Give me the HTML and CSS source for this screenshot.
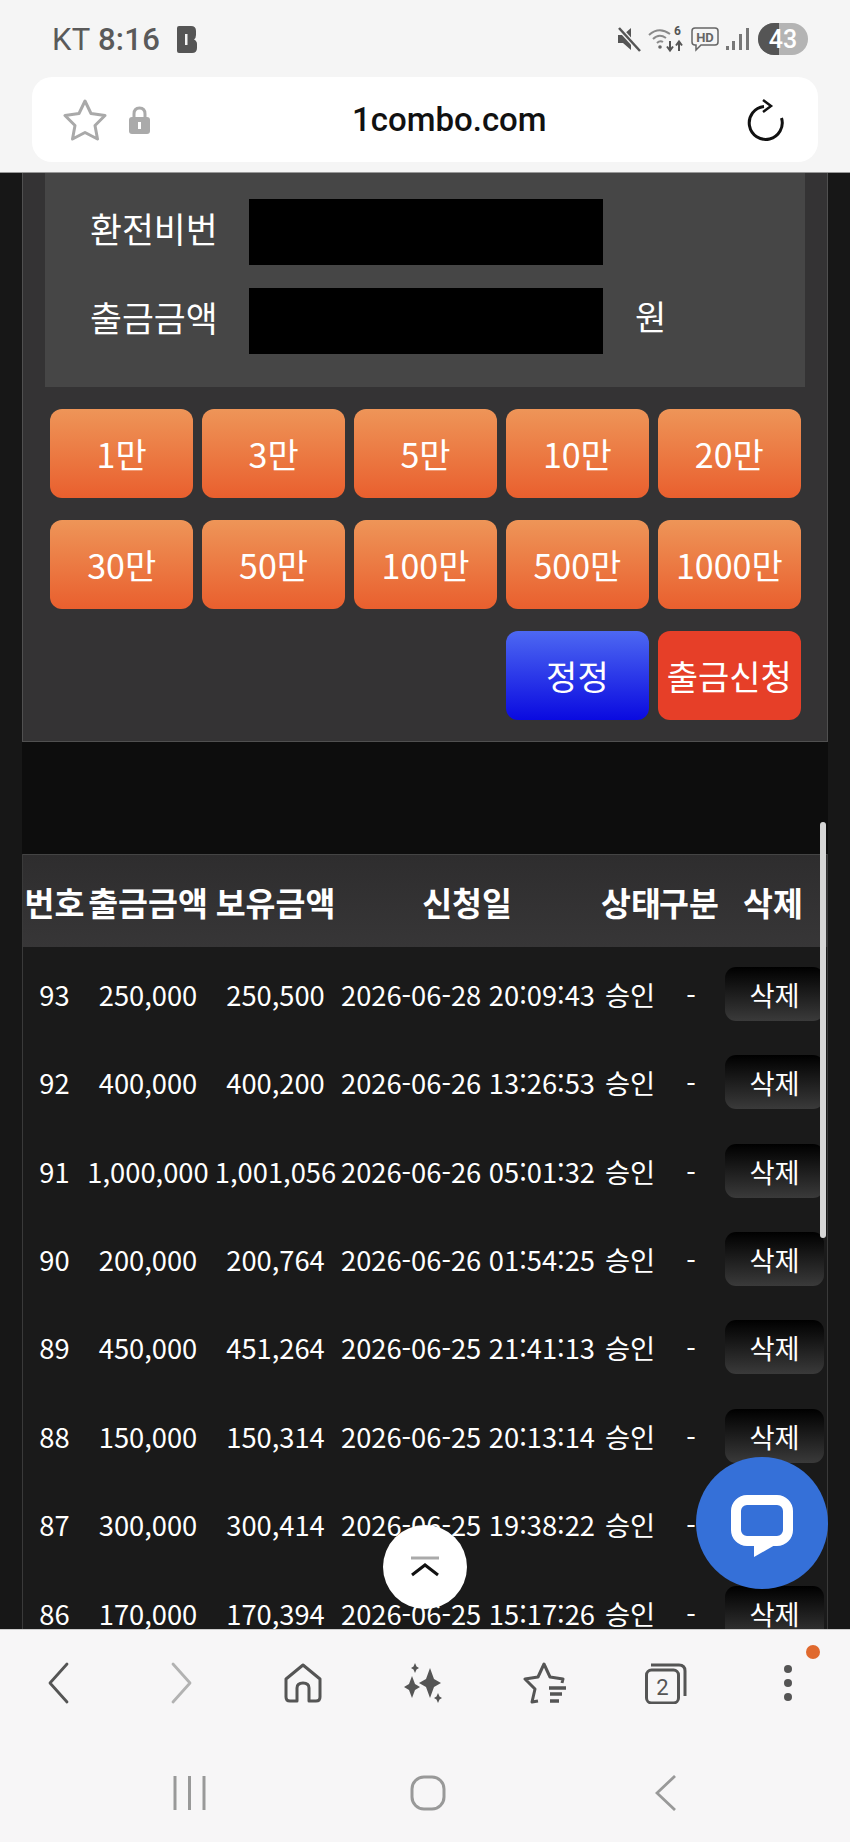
FILE: index.html
```html
<!DOCTYPE html>
<html lang="ko">
<head>
  <meta charset="UTF-8">
  <title>출금신청</title>
  <link rel="stylesheet" href="styles.css">
</head>
<body>

  <header class="top-chrome">
    <div class="status-bar">
      <div class="status-left">
        <span class="clock">KT <b class="clock-time">8:16</b></span>
        <svg class="b-icon" width="20" height="27" viewBox="0 0 20 27"><path d="M0 2Q0 0 2 0H14Q19 0 19 5V9Q19 12 17 13.500Q20 15 20 18V22Q20 27 15 27H2Q0 27 0 25Z" fill="#555"/><path d="M8 8H10.500V19H8Z" fill="#f5f5f5"/></svg>
      </div>
      <div class="status-right">
        <svg width="24" height="26" viewBox="0 0 24 26"><path d="M1 9H6L14 2V24L6 17H1Z" fill="#555"/><path d="M2 2L23 25" stroke="#f5f5f5" stroke-width="5"/><path d="M2 2L23 25" stroke="#555" stroke-width="2.500"/></svg>
        <svg width="36" height="28" viewBox="0 0 36 28" fill="none"><path d="M1 10Q11 1 22 9M5 14Q11 8 18 13M9 18Q12 15 15 17" stroke="#8a8a8a" stroke-width="2"/><circle cx="12" cy="22" r="1.800" fill="#666"/><text x="26" y="10" class="wifi-num">6</text><path d="M22 16V25M19 21.500L22 25.500L25 21.500M31 26V17M28 20.500L31 16.500L34 20.500" stroke="#555" stroke-width="2"/></svg>
        <svg width="28" height="26" viewBox="0 0 28 26" fill="none"><path d="M4 2H24Q27 2 27 5V16Q27 19 24 19H10L5 24V19H4Q1 19 1 16V5Q1 2 4 2Z" stroke="#666" stroke-width="1.500"/><text x="14" y="16" text-anchor="middle" class="hd-text">HD</text></svg>
        <svg width="23" height="24" viewBox="0 0 23 24" fill="#777"><rect x="0" y="19" width="3" height="4"/><rect x="6" y="14" width="3" height="9"/><rect x="13" y="7" width="3" height="16"/><rect x="20" y="1" width="3" height="22"/></svg>
        <div class="battery">
          <span class="battery-fill"></span>
          <span class="battery-num">43</span>
        </div>
      </div>
    </div>
    <div class="url-bar">
      <div class="url-left">
        <svg width="46" height="43" viewBox="0 0 46 43" fill="none"><path d="M23 3L29 15.500L43 17.500L33 27.500L35.500 41L23 34.500L10.500 41L13 27.500L3 17.500L17 15.500Z" stroke="#a9a9a9" stroke-width="3" stroke-linejoin="round"/></svg>
        <svg width="21" height="28" viewBox="0 0 21 28"><path d="M5 13V8Q5 2 10.500 2Q16 2 16 8V13" fill="none" stroke="#aaa" stroke-width="3"/><rect x="0" y="11" width="21" height="17" rx="3" fill="#aaa"/><rect x="9" y="16" width="3" height="7" fill="#fff"/></svg>
      </div>
      <span class="url-text">1combo.com</span>
      <svg class="reload" width="38" height="42" viewBox="0 0 38 42" fill="none"><path d="M17 7.500A16.500 16.500 0 1 0 34.500 19" stroke="#111" stroke-width="3"/><path d="M16 1L24 7L16 13" stroke="#111" stroke-width="2.500"/></svg>
    </div>
  </header>

  <main class="page">
    <section class="panel">
      <div class="form-box">
        <div class="form-row">
          <label class="form-label">환전비번</label>
          <div class="masked"></div>
        </div>
        <div class="form-row">
          <label class="form-label">출금금액</label>
          <div class="masked"></div>
          <span class="unit">원</span>
        </div>
      </div>
      <div class="amount-grid">
        <button type="button" class="btn">1만</button>
        <button type="button" class="btn">3만</button>
        <button type="button" class="btn">5만</button>
        <button type="button" class="btn">10만</button>
        <button type="button" class="btn">20만</button>
        <button type="button" class="btn">30만</button>
        <button type="button" class="btn">50만</button>
        <button type="button" class="btn">100만</button>
        <button type="button" class="btn">500만</button>
        <button type="button" class="btn">1000만</button>
        <button type="button" class="btn btn-blue">정정</button>
        <button type="button" class="btn btn-red">출금신청</button>
      </div>
    </section>

    <div class="spacer"></div>

    <table class="list">
      <colgroup>
        <col class="c-no"><col class="c-out"><col class="c-have"><col class="c-date"><col class="c-state"><col class="c-type"><col class="c-del">
      </colgroup>
      <thead>
        <tr><th>번호</th><th>출금금액</th><th>보유금액</th><th>신청일</th><th>상태</th><th>구분</th><th>삭제</th></tr>
      </thead>
      <tbody>
        <tr><td>93</td><td>250,000</td><td>250,500</td><td>2026-06-28 20:09:43</td><td>승인</td><td>-</td><td><button type="button" class="del">삭제</button></td></tr>
        <tr><td>92</td><td>400,000</td><td>400,200</td><td>2026-06-26 13:26:53</td><td>승인</td><td>-</td><td><button type="button" class="del">삭제</button></td></tr>
        <tr><td>91</td><td>1,000,000</td><td>1,001,056</td><td>2026-06-26 05:01:32</td><td>승인</td><td>-</td><td><button type="button" class="del">삭제</button></td></tr>
        <tr><td>90</td><td>200,000</td><td>200,764</td><td>2026-06-26 01:54:25</td><td>승인</td><td>-</td><td><button type="button" class="del">삭제</button></td></tr>
        <tr><td>89</td><td>450,000</td><td>451,264</td><td>2026-06-25 21:41:13</td><td>승인</td><td>-</td><td><button type="button" class="del">삭제</button></td></tr>
        <tr><td>88</td><td>150,000</td><td>150,314</td><td>2026-06-25 20:13:14</td><td>승인</td><td>-</td><td><button type="button" class="del">삭제</button></td></tr>
        <tr><td>87</td><td>300,000</td><td>300,414</td><td>2026-06-25 19:38:22</td><td>승인</td><td>-</td><td><button type="button" class="del">삭제</button></td></tr>
        <tr><td>86</td><td>170,000</td><td>170,394</td><td>2026-06-25 15:17:26</td><td>승인</td><td>-</td><td><button type="button" class="del">삭제</button></td></tr>
      </tbody>
    </table>

    <div class="scroll-thumb"></div>

    <button type="button" class="to-top" aria-label="맨 위로">
      <svg width="30" height="22" viewBox="0 0 30 22" fill="none"><path d="M1 2H29" stroke="#aaa" stroke-width="3"/><path d="M2 19L15 9L28 19" stroke="#111" stroke-width="3"/></svg>
    </button>

    <button type="button" class="chat" aria-label="채팅">
      <svg width="64" height="64" viewBox="0 0 64 64" fill="none"><rect x="6" y="6" width="52" height="41" rx="11" stroke="#fff" stroke-width="10"/><path d="M24 42V63L45 51V42Z" fill="#fff"/></svg>
    </button>
  </main>

  <footer class="bottom-chrome">
    <nav class="browser-nav">
      <svg width="22" height="42" viewBox="0 0 22 42" fill="none"><path d="M20 2L3 21L20 40" stroke="#555" stroke-width="2.800" stroke-linecap="round" stroke-linejoin="round"/></svg>
      <svg class="nav-fwd" width="22" height="42" viewBox="0 0 22 42" fill="none"><path d="M2 2L19 21L2 40" stroke="#b2b2b2" stroke-width="2.800" stroke-linecap="round" stroke-linejoin="round"/></svg>
      <svg class="nav-home" width="38" height="40" viewBox="0 0 38 40" fill="none"><path d="M13 38H6Q2 38 2 34V16L19 2L36 16V34Q36 38 32 38H25V25Q25 20 19 20Q13 20 13 25Z" stroke="#555" stroke-width="3" stroke-linejoin="round"/></svg>
      <svg width="38" height="40" viewBox="0 0 38 40" fill="#555"><path d="M26 5L30 16L37 20L30 24L26 35L22 24L15 20L22 16Z"/><path d="M8 13L11 21L16 24L11 27L8 35L5 27L0 24L5 21Z"/><path d="M11 0L12.500 3.500L15 5L12.500 6.500L11 10L9.500 6.500L7 5L9.500 3.500Z"/><path d="M34 30L35.500 33.500L38 35L35.500 36.500L34 40L32.500 36.500L30 35L32.500 33.500Z"/></svg>
      <svg width="43" height="42" viewBox="0 0 43 42" fill="none"><path d="M15 39L9 40L12 27L2 17L15 15L21 2L27 15L40 17L39 21" stroke="#555" stroke-width="3" stroke-linejoin="round"/><path d="M26 26H43M27 32H39M27 39H36" stroke="#555" stroke-width="3.500"/></svg>
      <svg width="42" height="42" viewBox="0 0 42 42" fill="none"><rect x="1.500" y="8" width="32" height="33" rx="5" stroke="#555" stroke-width="3"/><path d="M6 3H34Q40 3 40 9V34" stroke="#555" stroke-width="3"/><text x="17.500" y="33" text-anchor="middle" class="tab-num">2</text></svg>
      <div class="more">
        <span class="more-dot"></span><span class="more-dot"></span><span class="more-dot"></span>
        <span class="notice-dot"></span>
      </div>
    </nav>
    <nav class="system-nav">
      <svg width="33" height="34" viewBox="0 0 33 34" stroke="#999" stroke-width="3"><path d="M2 0V34M16.500 0V34M31 0V34"/></svg>
      <svg class="sys-home" width="36" height="36" viewBox="0 0 36 36" fill="none"><rect x="2" y="2" width="32" height="32" rx="12" stroke="#999" stroke-width="3"/></svg>
      <svg width="22" height="36" viewBox="0 0 22 36" fill="none"><path d="M20 1L2 18L20 35" stroke="#999" stroke-width="2.800"/></svg>
    </nav>
  </footer>

</body>
</html>
```

FILE: styles.css
```css
* {
  box-sizing: border-box;
}
body {
  margin: 0;
  height: 1842px;
  display: flex;
  flex-direction: column;
  overflow: hidden;
  background: #171717;
  font-family: "Noto Sans CJK KR", "Noto Sans", sans-serif;
}

/* browser top */
.top-chrome {
  height: 173px;
  flex: none;
  background: #f5f5f5;
  padding: 23px 32px 0;
  border-bottom: 1px solid #999;
}
.status-bar {
  height: 32px;
  display: flex;
  justify-content: space-between;
  align-items: center;
  padding: 0 10px 0 20px;
}
.status-left {
  display: flex;
  align-items: center;
  gap: 17px;
}
.clock {
  font-family: Roboto, sans-serif;
  font-size: 31px;
  letter-spacing: 0.300px;
  color: #5a5a5a;
}
.clock-time {
  font-weight: 500;
}
.status-right {
  display: flex;
  align-items: center;
  gap: 7px;
}
.wifi-num {
  font-family: Roboto, sans-serif;
  font-size: 12px;
  font-weight: 700;
  fill: #555;
}
.hd-text {
  font-family: Roboto, sans-serif;
  font-size: 13px;
  font-weight: 700;
  fill: #666;
}
.battery {
  position: relative;
  width: 50px;
  height: 32px;
  margin-left: 2px;
  border-radius: 16px;
  background: #b4b4b4;
  overflow: hidden;
  display: flex;
  align-items: center;
  justify-content: center;
}
.battery-fill {
  position: absolute;
  left: 0;
  top: 0;
  bottom: 0;
  width: 21px;
  background: #555;
}
.battery-num {
  position: relative;
  font-family: Roboto, sans-serif;
  font-size: 25px;
  font-weight: 500;
  color: #fff;
}
.url-bar {
  height: 85px;
  margin-top: 22px;
  background: #fff;
  border-radius: 20px;
  display: flex;
  align-items: center;
  justify-content: space-between;
  padding: 0 33px 0 30px;
  position: relative;
}
.url-left {
  display: flex;
  align-items: center;
  gap: 21px;
}
.url-text {
  position: absolute;
  left: 320px;
  font-family: Roboto, sans-serif;
  font-size: 33px;
  font-weight: 500;
  color: #111;
}

/* page */
.page {
  flex: 1;
  position: relative;
  overflow: hidden;
}
.panel {
  margin: 0 22px;
  width: 806px;
  background: #343334;
  border: 1px solid #505050;
  border-top: 0;
  height: 569px;
}
.form-box {
  margin: 0 22px;
  height: 214px;
  background: #464646;
  padding: 26px 0 0 45px;
  display: flex;
  flex-direction: column;
  gap: 23px;
}
.form-row {
  display: flex;
  align-items: center;
  height: 66px;
}
.form-label {
  width: 159px;
  padding-bottom: 9px;
  font-size: 34.700px;
  color: #fff;
}
.masked {
  width: 354px;
  height: 66px;
  background: #000;
}
.unit {
  margin-left: 32px;
  padding-bottom: 12px;
  font-size: 34px;
  color: #fff;
}
.amount-grid {
  margin: 22px 26px 0 27px;
  display: grid;
  grid-template-columns: repeat(5, 1fr);
  grid-auto-rows: 89px;
  gap: 22px 8.500px;
}
.btn {
  border: 0;
  padding: 0;
  border-radius: 12px;
  background: linear-gradient(#ee9558, #e95f2e);
  color: #fff;
  font-family: inherit;
  font-size: 34px;
}
.btn-blue {
  grid-column: 4;
  background: linear-gradient(#4d68f2, #0a0ae0);
}
.btn-red {
  background: #e63f28;
}
.spacer {
  margin: 0 22px;
  height: 112px;
  background: #0d0d0d;
}

/* table */
.list {
  margin-left: 22px;
  width: 806px;
  table-layout: fixed;
  border-collapse: separate;
  border-spacing: 0;
  background: #1a1a1a;
  border-left: 1px solid #3a3a3a;
  border-right: 1px solid #3a3a3a;
  color: #fff;
}
.c-no { width: 63px; }
.c-out { width: 124px; }
.c-have { width: 131px; }
.c-date { width: 252px; }
.c-state { width: 66px; }
.c-type { width: 60px; }
.list th {
  height: 93px;
  padding: 0;
  font-size: 32.500px;
  font-weight: 700;
  white-space: nowrap;
  background: linear-gradient(#2e2d2e, #373637);
  border-top: 1px solid #444;
}
.list td {
  height: 88.400px;
  padding: 0;
  text-align: center;
  font-size: 27.300px;
  white-space: nowrap;
}
.list th:nth-child(5),
.list td:nth-child(5) {
  padding-left: 8px;
}
.list td:nth-child(6) {
  padding-left: 4px;
}
.list tbody tr:first-child td {
  height: 91px;
  padding-top: 6px;
  padding-bottom: 3px;
}
.del {
  display: block;
  margin-left: 6px;
  width: 99px;
  height: 54px;
  border: 0;
  padding: 0;
  border-radius: 11px;
  background: linear-gradient(#000, #3a3a3a);
  color: #fff;
  font-family: inherit;
  font-size: 27.300px;
}

/* floating */
.scroll-thumb {
  position: absolute;
  left: 820px;
  top: 649px;
  width: 6px;
  height: 416px;
  border-radius: 3px;
  background: #d6d6d6;
}
.to-top {
  position: absolute;
  left: 383px;
  top: 1352px;
  width: 84px;
  height: 84px;
  border: 0;
  padding: 0;
  border-radius: 50%;
  background: #fff;
  display: flex;
  align-items: center;
  justify-content: center;
}
.chat {
  position: absolute;
  left: 696px;
  top: 1284px;
  width: 132px;
  height: 132px;
  border: 0;
  padding: 5px 0 0;
  border-radius: 50%;
  background: #3570d8;
  display: flex;
  align-items: center;
  justify-content: center;
}

/* browser bottom */
.bottom-chrome {
  height: 213px;
  flex: none;
  background: #f7f6f7;
  border-top: 1px solid #ccc;
}
.browser-nav {
  height: 114px;
  margin-left: -3px;
  display: grid;
  grid-template-columns: repeat(7, 121.670px);
  justify-items: center;
  align-items: center;
  padding-bottom: 8px;
}
.nav-fwd {
  margin-left: 6px;
}
.nav-home {
  margin-left: 4px;
}
.tab-num {
  font-family: Roboto, sans-serif;
  font-size: 22px;
  fill: #555;
}
.more {
  position: relative;
  width: 8px;
  display: flex;
  flex-direction: column;
  gap: 6px;
}
.more-dot {
  width: 8px;
  height: 8px;
  border-radius: 50%;
  background: #555;
}
.notice-dot {
  position: absolute;
  left: 22px;
  top: -20px;
  width: 14px;
  height: 14px;
  border-radius: 50%;
  background: #e0692e;
}
.system-nav {
  display: flex;
  align-items: center;
  padding: 31px 173px 0 173px;
  justify-content: space-between;
}
.sys-home {
  margin-right: 5px;
}
```
